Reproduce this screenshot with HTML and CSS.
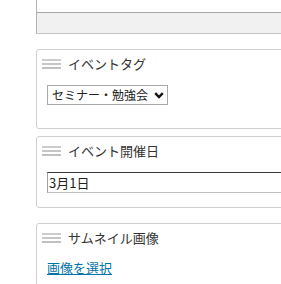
FILE: index.html
```html
<!DOCTYPE html>
<html lang="ja">
<head>
    <meta charset="UTF-8">
    <meta name="viewport" content="width=device-width, initial-scale=1.0">
    <title>イベント編集</title>
    <link rel="stylesheet" href="styles.css">
</head>
<body>

    <div class="sidebar">
        <div class="editor">
            <div class="editor-area"></div>
            <div class="status-bar"></div>
        </div>

        <div class="postbox postbox-tag">
            <div class="hndle">
                <svg class="handle-icon" width="19" height="10" viewBox="0 0 19 10">
                    <rect x="0" y="0" width="19" height="2" fill="#cccccc"/>
                    <rect x="0" y="4" width="19" height="2" fill="#c6c6c6"/>
                    <rect x="0" y="8" width="19" height="2" fill="#c0c0c0"/>
                </svg>
                <span class="hndle-title">イベントタグ</span>
            </div>
            <div class="inside">
                <span class="select-wrap">
                    <select class="tag-select">
                        <option>セミナー・勉強会</option>
                    </select>
                    <svg class="chevron" width="10" height="7" viewBox="0 0 10 7">
                        <path d="M1.2 1.2 L5 5 L8.8 1.2" fill="none" stroke="#111" stroke-width="2.4"/>
                    </svg>
                </span>
            </div>
        </div>

        <div class="postbox postbox-date">
            <div class="hndle">
                <svg class="handle-icon" width="19" height="10" viewBox="0 0 19 10">
                    <rect x="0" y="0" width="19" height="2" fill="#cccccc"/>
                    <rect x="0" y="4" width="19" height="2" fill="#c6c6c6"/>
                    <rect x="0" y="8" width="19" height="2" fill="#c0c0c0"/>
                </svg>
                <span class="hndle-title">イベント開催日</span>
            </div>
            <div class="inside">
                <input class="date-input" type="text" value="3月1日">
            </div>
        </div>

        <div class="postbox postbox-thumb">
            <div class="hndle">
                <svg class="handle-icon" width="19" height="10" viewBox="0 0 19 10">
                    <rect x="0" y="0" width="19" height="2" fill="#cccccc"/>
                    <rect x="0" y="4" width="19" height="2" fill="#c6c6c6"/>
                    <rect x="0" y="8" width="19" height="2" fill="#c0c0c0"/>
                </svg>
                <span class="hndle-title">サムネイル画像</span>
            </div>
            <div class="inside">
                <a class="select-link" href="#">画像を選択</a>
            </div>
        </div>
    </div>

</body>
</html>
```

FILE: styles.css
```css
body {
    margin: 0;
    background-color: #ffffff;
    font-family: "Noto Sans CJK JP", "Noto Sans", sans-serif;
    color: #333333;
    overflow: hidden;
}
.sidebar {
    padding-left: 36px;
    width: 300px;
}
.editor {
    border-left: 1px solid #b4b4b4;
    border-bottom: 1px solid #c4c4c4;
}
.editor-area {
    height: 12px;
    border-bottom: 1px solid #a8a8a8;
}
.status-bar {
    height: 20px;
    background-color: #f1f1f1;
}
.postbox {
    border: 1px solid #cfcfcf;
    border-radius: 3px;
    margin-top: 15px;
}
.postbox-date {
    margin-top: 7px;
}
.hndle {
    display: flex;
    align-items: center;
    gap: 7px;
    height: 28px;
    padding-left: 5px;
}
.handle-icon {
    flex-shrink: 0;
}
.hndle-title {
    font-size: 13px;
    line-height: 18px;
}
.inside {
    padding: 7px 0 14px 10px;
    font-size: 13px;
    line-height: 18px;
}
.postbox-tag .inside {
    padding-bottom: 23px;
}
.select-wrap {
    display: flex;
    align-items: center;
    gap: 5px;
    height: 18px;
    width: 115px;
    border: 1px solid #a9a9a9;
    padding-left: 4px;
}
.tag-select {
    appearance: none;
    -webkit-appearance: none;
    border: none;
    background: transparent;
    padding: 0;
    margin: 0;
    font-family: "Noto Sans CJK JP", sans-serif;
    font-size: 12px;
    color: #222222;
    line-height: 18px;
    outline: none;
}
.date-input {
    display: block;
    width: 300px;
    height: 19px;
    padding: 0 0 0 1px;
    margin: 0;
    border: 1px solid #a0a0a0;
    border-top-color: #3a3a3a;
    border-bottom-color: #bdbdbd;
    font-family: "Noto Sans CJK JP", sans-serif;
    font-size: 13px;
    color: #222222;
}
.select-link {
    display: block;
    color: #0073aa;
    text-decoration: underline;
}
```
